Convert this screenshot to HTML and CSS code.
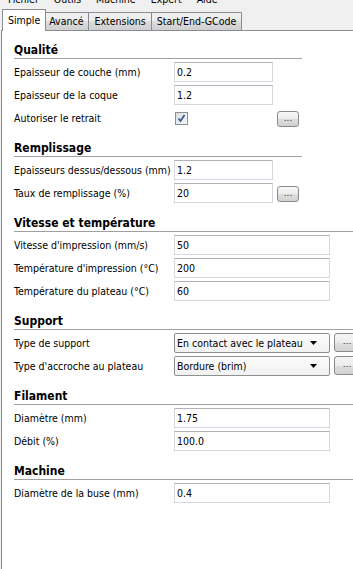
FILE: index.html
```html
<!DOCTYPE html>
<html>
<head>
<meta charset="UTF-8">
<title>Cura - Simple</title>
<link rel="stylesheet" href="styles.css">
</head>
<body>
	<div class="menubar">
		<span>Fichier</span>
		<span>Outils</span>
		<span>Machine</span>
		<span>Expert</span>
		<span>Aide</span>
	</div>
	<div class="tabs">
		<div class="tab active">Simple</div>
		<div class="tab">Avancé</div>
		<div class="tab">Extensions</div>
		<div class="tab">Start/End-GCode</div>
	</div>
	<div class="panel">
		<div class="section narrow">
			<h2>Qualité</h2>
			<div class="row"><label>Epaisseur de couche (mm)</label><input class="field" value="0.2"></div>
			<div class="row"><label>Epaisseur de la coque</label><input class="field" value="1.2"></div>
			<div class="row">
				<label>Autoriser le retrait</label>
				<span class="check"><svg width="9" height="9" viewBox="0 0 9 9"><path d="M1.5 4.5 L3.5 7 L7.5 1" fill="none" stroke="#3d5a99" stroke-width="1.8"/></svg></span>
				<button class="more">...</button>
			</div>
		</div>
		<div class="section narrow">
			<h2>Remplissage</h2>
			<div class="row"><label>Epaisseurs dessus/dessous (mm)</label><input class="field" value="1.2"></div>
			<div class="row"><label>Taux de remplissage (%)</label><input class="field" value="20"><button class="more">...</button></div>
		</div>
		<div class="section wide">
			<h2>Vitesse et température</h2>
			<div class="row"><label>Vitesse d'impression (mm/s)</label><input class="field" value="50"></div>
			<div class="row"><label>Température d'impression (°C)</label><input class="field" value="200"></div>
			<div class="row"><label>Température du plateau (°C)</label><input class="field" value="60"></div>
		</div>
		<div class="section wide">
			<h2>Support</h2>
			<div class="row">
				<label>Type de support</label>
				<div class="combo"><span>En contact avec le plateau</span><svg width="7" height="4" viewBox="0 0 7 4"><path d="M0 0 H7 L3.5 4 Z" fill="#000"/></svg></div>
				<button class="more tall">...</button>
			</div>
			<div class="row">
				<label>Type d'accroche au plateau</label>
				<div class="combo"><span>Bordure (brim)</span><svg width="7" height="4" viewBox="0 0 7 4"><path d="M0 0 H7 L3.5 4 Z" fill="#000"/></svg></div>
				<button class="more tall">...</button>
			</div>
		</div>
		<div class="section wide">
			<h2>Filament</h2>
			<div class="row"><label>Diamètre (mm)</label><input class="field" value="1.75"></div>
			<div class="row"><label>Débit (%)</label><input class="field" value="100.0"></div>
		</div>
		<div class="section wide">
			<h2>Machine</h2>
			<div class="row"><label>Diamètre de la buse (mm)</label><input class="field" value="0.4"></div>
		</div>
	</div>
</body>
</html>
```
FILE: styles.css
```css
body {
	margin: 0;
	width: 353px;
	height: 569px;
	overflow: hidden;
	background-color: #f0f0f0;
	font-family: "DejaVu Sans Condensed", "DejaVu Sans", sans-serif;
	font-stretch: condensed;
	font-size: 10.5px;
	color: #000;
	display: flex;
	flex-direction: column;
}

.menubar {
	height: 6px;
	overflow: hidden;
	display: flex;
	gap: 15px;
	padding-left: 8px;
}

.menubar span {
	line-height: 13px;
	margin-top: -7px;
}

.tabs {
	height: 24px;
	display: flex;
	align-items: flex-end;
	padding-left: 4px;
}

.tab {
	height: 17px;
	line-height: 17px;
	padding: 0 5px;
	margin-left: -1px;
	border: 1px solid #898c95;
	border-bottom: none;
	background: linear-gradient(#f2f2f2, #ebebeb 50%, #dddddd 50%, #cfcfcf);
}

.tab.active {
	height: 21px;
	line-height: 20px;
	padding: 0 5px;
	margin-left: -2px;
	margin-right: -2px;
	margin-bottom: -1px;
	background: #fff;
	position: relative;
	z-index: 1;
}

.panel {
	flex: 1;
	margin-left: 1px;
	padding: 2px 0 0 12px;
	background-color: #fff;
	border-top: 1px solid #898c95;
	border-left: 1px solid #898c95;
	overflow: hidden;
}

.section.narrow {
	width: 288px;
}

.section.wide {
	width: 360px;
}

h2 {
	margin: 0 0 3px 0;
	padding: 10px 0 1px 0;
	font-size: 12px;
	font-weight: bold;
	line-height: 14px;
	border-bottom: 1px solid #a0a0a0;
}

.row {
	display: grid;
	grid-template-columns: 156px 99px 22px;
	column-gap: 4px;
	height: 23px;
	align-items: start;
}

.wide .row {
	grid-template-columns: 156px 156px 30px;
}

label {
	line-height: 20px;
	white-space: nowrap;
}

.field {
	box-sizing: border-box;
	width: 100%;
	height: 20px;
	margin: 0;
	padding: 0 2px;
	border: 1px solid #d5d9df;
	border-top-color: #b0b3ba;
	font: inherit;
	font-stretch: condensed;
	background: #fff;
}

.check {
	box-sizing: border-box;
	width: 13px;
	height: 13px;
	margin: 4px 0 0 1px;
	border: 1px solid #8e8f8f;
	background: linear-gradient(135deg, #d9dee4, #f6f7f9);
	display: flex;
	align-items: center;
	justify-content: center;
	grid-column: 2;
}

.more {
	grid-column: 3;
	box-sizing: border-box;
	width: 22px;
	height: 16px;
	margin: 3px 0 0 0;
	padding: 0 0 3px 0;
	border: 1px solid #8a8a8a;
	border-radius: 3px;
	background: linear-gradient(#f6f6f6, #ececec 50%, #dedede 50%, #d2d2d2);
	font-family: "DejaVu Sans", sans-serif;
	font-size: 9px;
	line-height: 10px;
	color: #333;
}

.more.tall {
	width: 26px;
	height: 19px;
	margin-top: 0;
}

.combo {
	box-sizing: border-box;
	height: 20px;
	padding: 0 12px 0 2px;
	border: 1px solid #8e8f8f;
	border-radius: 2px;
	background: linear-gradient(#fdfdfd, #f1f1f1);
	display: flex;
	align-items: center;
	justify-content: space-between;
}
```
